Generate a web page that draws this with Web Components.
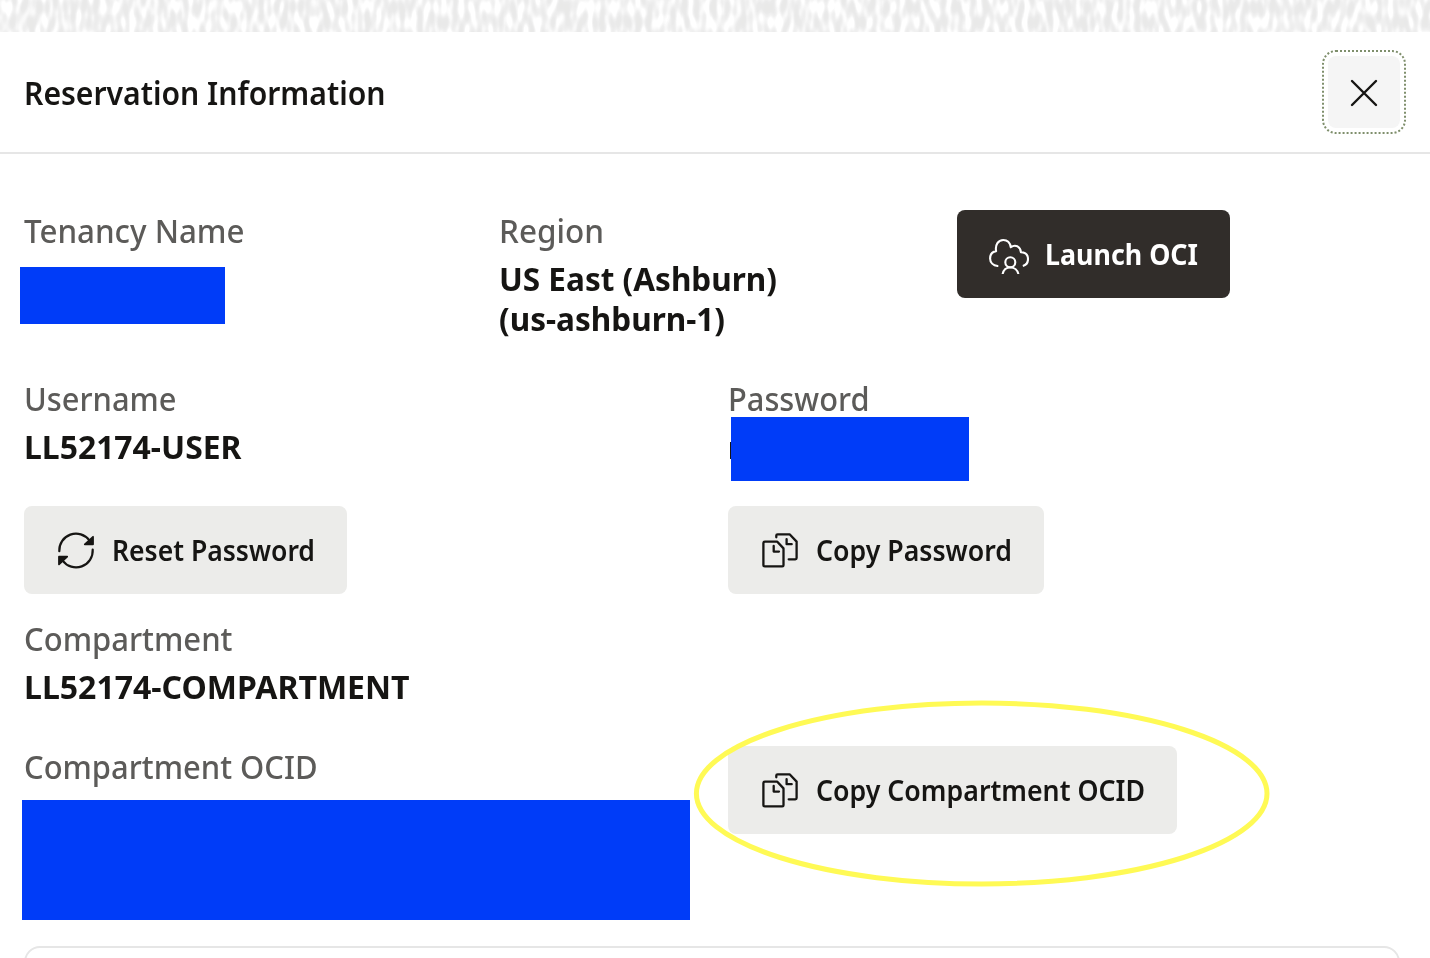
<!DOCTYPE html>
<html lang="en">
<head>
<meta charset="utf-8">
<title>Reservation Information</title>
<style>
  html, body { margin: 0; height: 958px; overflow: hidden; background: #fff; }
  body { font-family: "Noto Sans", "Open Sans", sans-serif; color: #161513; }
</style>
</head>
<body>
<reservation-page></reservation-page>
<script>
const define = (name, markup, ready) => {
  const template = document.createElement('template');
  template.innerHTML = markup;
  customElements.define(name, class extends HTMLElement {
    constructor() {
      super();
      this.attachShadow({ mode: 'open' }).append(template.content.cloneNode(true));
    }
    connectedCallback() { if (ready) ready.call(this, this.shadowRoot); }
  });
};

/* Text condensed so that its longest line has the advance width given in "w". */
define('fit-text', `
  <style>
    :host { display: block; white-space: nowrap; }
    span { display: inline-block; vertical-align: top; transform-origin: 0 50%; }
  </style><span><slot></slot></span>`, function (root) {
  const span = root.querySelector('span');
  const w = Number(this.getAttribute('w'));
  this.style.width = w + 'px';
  const natural = span.getBoundingClientRect().width;
  if (natural) span.style.transform = `scaleX(${w / natural})`;
});

const ICONS = {
  cloud: `<g stroke-width="2.1" transform="translate(0 3.7)"><path d="M9.3 28.3H8.6C4.2 27.8 1.1 24.7 1.1 20.7C1.1 16.8 3.6 14 7.1 13.4C6 7 9.3 2.3 14.3 2.3C18.4 2.3 21 5 21.8 9.5C26.5 6.2 31.6 9 31.9 14.6C36.6 14.7 39 17.6 39 21.4C39 25 37 27.5 33.8 28.3"/>
    <circle cx="21.3" cy="24.6" r="5"/><path d="M13.6 36.4C14.4 32.6 17.2 29.8 21.3 29.8C25.4 29.8 28.6 32.6 29.4 36.4"/></g>`,
  reset: `<g stroke-width="2.2" stroke-linecap="round"><path d="M3.3 21.2A16.7 16.7 0 0 1 33.4 10.4"/><path d="M36.7 19.6A16.7 16.7 0 0 1 6.6 30.6"/></g>
    <path fill="currentColor" stroke-width="1.8" d="M37 6.8V14.3H28.8ZM3 26.7H11.2L3 34.4Z"/>`,
  copy: `<g stroke-width="2.3" stroke-linecap="round"><path d="M5 11.7H17.3L23.5 18.4V35.2Q23.5 36.4 22.3 36.4H4.8Q3.4 36.4 3.4 35.2V13Q3.4 11.7 5 11.7Z"/>
    <path d="M13.7 15.9V21.6H19M16.3 7.3V5.6Q16.3 4.3 17.6 4.3H29.6L36.6 11.6V28Q36.6 29.3 35.3 29.3H28.7M26.6 9.2V14.2H31.7"/></g>`
};
define('action-button', `
  <style>
    :host { display: block; }
    button { display: flex; align-items: center; gap: 16px; height: 88px; padding: 0 32px;
      border: 0; border-radius: 8px; background: #ececea; color: #161513;
      font: 580 28.6px/40px "Noto Sans", "Open Sans", sans-serif; }
    :host([dark]) button { background: #312d2a; color: #fff; font-weight: 700; }
    svg { flex: none; width: 40px; height: 40px; fill: none; stroke: currentColor; stroke-linejoin: round; }
  </style>
  <button type="button"><svg viewBox="0 0 40 40"></svg><slot></slot></button>`, function (root) {
  root.querySelector('svg').innerHTML = ICONS[this.getAttribute('icon')];
});

define('info-field', `
  <style>
    :host { display: flex; flex-direction: column; gap: 8px; font-size: 32.5px; line-height: 40px; }
    .label { color: #5c5b59; font-weight: 500; }
    .value { font-weight: 700; }
  </style>
  <div class="label"><slot name="label"></slot></div>
  <div class="value"><slot></slot></div>`);

define('redacted-block', `<style>:host { display: block; background: #003cf8; }</style>`);

define('close-button', `
  <style>
    :host { display: block; width: 84px; height: 84px; }
    button { border: 0; padding: 0; background: none; display: block; }
    svg { display: block; }
  </style>
  <button type="button" aria-label="Close"><svg width="84" height="84" viewBox="0 0 84 84" fill="none">
    <rect x="1" y="1" width="82" height="82" rx="13" stroke="#7f8f6c" stroke-width="2" stroke-dasharray="2 2"/>
    <rect x="6" y="6" width="72" height="72" rx="8" fill="#f5f5f5"/>
    <path d="M30 31L54 55M54 31L30 55" stroke="#161513" stroke-width="2.4" stroke-linecap="round"/>
  </svg></button>`);

define('texture-strip', `
  <style>:host { display: block; height: 32px; background: #f1f1f0; } svg { display: block; }</style>
  <svg width="1430" height="32">
    <filter id="grain" x="0" y="0" width="100%" height="100%" color-interpolation-filters="sRGB">
      <feTurbulence type="fractalNoise" baseFrequency="0.17 0.065" numOctaves="1" seed="8"/>
      <feColorMatrix values=".4 0 0 0 .75  .4 0 0 0 .75  .4 0 0 0 .75  0 0 0 0 1"/>
      <feComponentTransfer>
        <feFuncR type="table" tableValues=".915 .915 .915 .915 .915 .915 .915 .915 .915 .915 .915 .915 .915 .915 .915 .915 .915 .915 .92 .95 1"/>
        <feFuncG type="table" tableValues=".915 .915 .915 .915 .915 .915 .915 .915 .915 .915 .915 .915 .915 .915 .915 .915 .915 .915 .92 .95 1"/>
        <feFuncB type="table" tableValues=".912 .912 .912 .912 .912 .912 .912 .912 .912 .912 .912 .912 .912 .912 .912 .912 .912 .912 .92 .95 1"/>
      </feComponentTransfer>
    </filter>
    <rect width="1430" height="32" filter="url(#grain)"/>
  </svg>`);

define('dialog-header', `
  <style>
    :host { display: flex; align-items: center; justify-content: space-between; height: 120px;
      padding: 0 24px; border-bottom: 2px solid #e6e6e6; font-size: 32.5px; line-height: 40px; font-weight: 580; }
    h1 { font: inherit; margin: 0; padding-top: 2px; }
  </style>
  <h1><slot></slot></h1><close-button></close-button>`);

define('highlight-ring', `
  <style>:host { display: block; pointer-events: none; } svg { display: block; }</style>
  <svg width="580" height="190" viewBox="0 0 580 190" fill="none">
    <ellipse cx="289.7" cy="95.5" rx="285.3" ry="90.5" stroke="#fffa55" stroke-width="5"/>
  </svg>`);

define('reservation-page', `
  <style>
    :host { display: block; position: relative; width: 1430px; height: 958px; overflow: hidden; }
    main { padding: 57px 30px 0 24px; }
    .row { display: grid; grid-template-columns: 704px 1fr; align-items: start; }
    .top { grid-template-columns: 475px 458px 1fr; height: 168px; }
    .top action-button { margin-top: -1px; }
    .account { height: 127px; }
    .actions { height: 113px; }
    .compartment { height: 128px; }
    .ocid { height: 199px; }
    .ocid action-button { margin-top: -1px; }
    .tenancy { width: 205px; height: 57px; margin: 8px 0 0 -4px; }
    .password { width: 238px; height: 64px; margin: -10px 0 0 2px; border-left: 1px solid;
      border-image: linear-gradient(#fff 25px, #161513 25px 42px, #fff 42px) 1; background-clip: padding-box; }
    .id { width: 668px; height: 120px; margin: 5px 0 0 -2px; }
    .card { width: 1372px; height: 40px; border: 2px solid #e6e6e6; border-radius: 16px; }
    highlight-ring { position: absolute; left: 692px; top: 698px; }
  </style>
  <texture-strip></texture-strip>
  <dialog-header><fit-text w="361.5">Reservation Information</fit-text></dialog-header>
  <main>
    <div class="row top">
      <info-field><fit-text slot="label" w="220.5">Tenancy Name</fit-text><redacted-block class="tenancy"></redacted-block></info-field>
      <info-field><fit-text slot="label" w="105">Region</fit-text><fit-text w="278">US East (Ashburn)<br>(us-ashburn-1)</fit-text></info-field>
      <action-button dark icon="cloud"><fit-text w="153">Launch OCI</fit-text></action-button>
    </div>
    <div class="row account">
      <info-field><fit-text slot="label" w="152.5">Username</fit-text><fit-text w="217.5">LL52174-USER</fit-text></info-field>
      <info-field><fit-text slot="label" w="141.5">Password</fit-text><redacted-block class="password"></redacted-block></info-field>
    </div>
    <div class="row actions">
      <action-button icon="reset"><fit-text w="203">Reset Password</fit-text></action-button>
      <action-button icon="copy"><fit-text w="196">Copy Password</fit-text></action-button>
    </div>
    <div class="row compartment">
      <info-field><fit-text slot="label" w="208.5">Compartment</fit-text><fit-text w="385.5">LL52174-COMPARTMENT</fit-text></info-field>
    </div>
    <div class="row ocid">
      <info-field><fit-text slot="label" w="293.5">Compartment OCID</fit-text><redacted-block class="id"></redacted-block></info-field>
      <action-button icon="copy"><fit-text w="329">Copy Compartment OCID</fit-text></action-button>
    </div>
    <div class="card"></div>
  </main>
  <highlight-ring></highlight-ring>`);
</script>
</body>
</html>
